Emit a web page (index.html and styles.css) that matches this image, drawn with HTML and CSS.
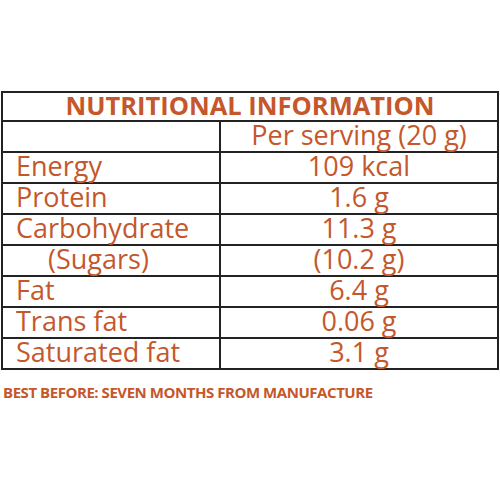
FILE: index.html
```html
<!DOCTYPE html>
<html>
<head>
<meta charset="utf-8">
<link rel="stylesheet" href="styles.css">
</head>
<body>
<div class="label">
  <table class="nutri">
    <colgroup><col class="c1"><col class="c2"></colgroup>
    <tr><th colspan="2" class="title">NUTRITIONAL INFORMATION</th></tr>
    <tr><td class="name"></td><td class="val">Per serving (20 g)</td></tr>
    <tr><td class="name">Energy</td><td class="val">109 kcal</td></tr>
    <tr><td class="name">Protein</td><td class="val">1.6 g</td></tr>
    <tr><td class="name">Carbohydrate</td><td class="val">11.3 g</td></tr>
    <tr><td class="name sub">(Sugars)</td><td class="val">(10.2 g)</td></tr>
    <tr><td class="name">Fat</td><td class="val">6.4 g</td></tr>
    <tr><td class="name">Trans fat</td><td class="val">0.06 g</td></tr>
    <tr><td class="name">Saturated fat</td><td class="val">3.1 g</td></tr>
  </table>
  <p class="best">BEST BEFORE: SEVEN MONTHS FROM MANUFACTURE</p>
</div>
</body>
</html>
```
FILE: styles.css
```css
html, body { margin: 0; padding: 0; background: #fff; }
body { font-family: "Open Sans", "DejaVu Sans", sans-serif; color: #c4572b; }
.label { padding: 91px 0 0 1px; }
.nutri {
  border-collapse: collapse;
  table-layout: fixed;
  width: 498px;
  border: 2px solid #222;
}
.c1 { width: 218px; }
.nutri th, .nutri td {
  border: 2px solid #222;
  padding: 0 0 4px 0;
  height: 25px;
  line-height: 25px;
  font-size: 27px;
  font-weight: 400;
  white-space: nowrap;
  vertical-align: middle;
}
.nutri .title {
  font-size: 25.5px;
  font-weight: 700;
  text-align: center;
  height: 25px;
  line-height: 25px;
  padding-bottom: 2px;
}
.nutri .name { padding-left: 13px; text-align: left; }
.nutri .sub { padding-left: 45px; }
.nutri .val { text-align: center; }
.best {
  margin: 12px 0 0 2px;
  font-size: 15px;
  font-weight: 700;
  letter-spacing: -0.45px;
}
```
